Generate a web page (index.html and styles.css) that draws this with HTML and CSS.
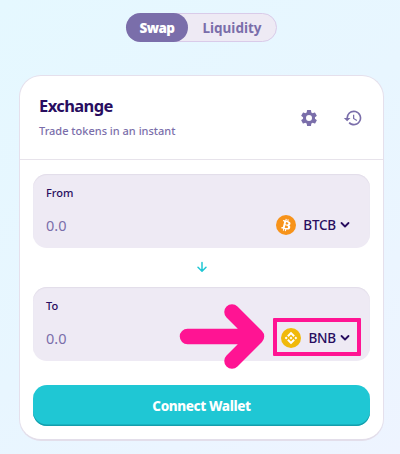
FILE: index.html
```
<!DOCTYPE html>
<html lang="en">
<head>
  <meta charset="UTF-8">
  <meta name="viewport" content="width=device-width, initial-scale=1.0">
  <title>Exchange</title>
  <link rel="stylesheet" href="styles.css">
</head>
<body>
  <nav class="tabs">
    <a class="tab active">Swap</a>
    <a class="tab">Liquidity</a>
  </nav>

  <main class="card">
    <header class="card-header">
      <div class="heading">
        <h1>Exchange</h1>
        <p>Trade tokens in an instant</p>
      </div>
      <svg class="icon" viewBox="0 0 24 24"><path d="M19.14 12.94c.04-.3.06-.61.06-.94s-.02-.64-.07-.94l2.03-1.58a.49.49 0 0 0 .12-.61l-1.92-3.32a.49.49 0 0 0-.59-.22l-2.39.96a7 7 0 0 0-1.62-.94l-.36-2.54A.48.48 0 0 0 13.92 2.400h-3.840a.48.48 0 0 0-.47.41l-.36 2.540a7 7 0 0 0-1.620.940l-2.390-.960a.48.48 0 0 0-.590.220L2.740 8.870a.48.48 0 0 0 .120.610l2.030 1.580a6 6 0 0 0 0 1.880l-2.030 1.580a.49.49 0 0 0-.120.610l1.920 3.320c.12.220.370.290.590.220l2.390-.960c.5.380 1.030.700 1.620.940l.360 2.540c.05.240.240.410.480.410h3.840c.24 0 .440-.170.470-.410l.360-2.540a7 7 0 0 0 1.620-.940l2.390.960c.22.080.470 0 .590-.220l1.920-3.320a.48.48 0 0 0-.120-.610zM12 15.600a3.600 3.600 0 1 1 0-7.200 3.600 3.600 0 0 1 0 7.200z"/></svg>
      <svg class="icon" viewBox="0 0 24 24"><path d="M13 3a9 9 0 0 0-9 9H1l3.890 3.890.070.140L9 12H6a7 7 0 1 1 2.060 4.940l-1.420 1.420A9 9 0 1 0 13 3zm-1 5v5l4.280 2.540.720-1.210-3.500-2.080V8z"/></svg>
    </header>

    <div class="card-body">
      <section class="field">
        <div class="label">From</div>
        <div class="field-row">
          <span class="amount">0.0</span>
          <div class="token">
            <svg class="coin" viewBox="0 0 32 32"><circle cx="16" cy="16" r="16" fill="#f7931a"/><path fill="#fff" d="M23.190 14.020c.310-2.100-1.290-3.230-3.480-3.980l.710-2.850-1.730-.430-.690 2.770-1.390-.330.700-2.790-1.730-.430-.710 2.840-1.100-.260-2.400-.600-.460 1.860s1.290.300 1.260.310c.700.180.830.640.810 1.010l-1.950 7.790c-.090.210-.310.530-.790.410l-1.260-.310-.860 2 2.250.560 1.240.320-.720 2.880 1.730.430.710-2.850 1.380.360-.710 2.830 1.730.430.720-2.870c2.950.560 5.170.330 6.100-2.340.750-2.150-.040-3.390-1.590-4.190 1.130-.260 1.980-1 2.210-2.540zm-3.950 5.540c-.540 2.150-4.150.990-5.320.700l.950-3.810c1.170.290 4.930.870 4.370 3.110zm.530-5.570c-.490 1.950-3.490.960-4.470.720l.860-3.460c.980.240 4.120.700 3.610 2.740z"/></svg>
            <span class="symbol">BTCB</span>
            <svg class="chevron" viewBox="0 0 10 8"><path d="M1.500 2 5 5.500 8.500 2"/></svg>
          </div>
        </div>
      </section>

      <svg class="arrow-down" viewBox="0 0 12 12"><path d="M6 1.500v8.500M2 6.300l4 4 4-4"/></svg>

      <section class="field">
        <div class="label">To</div>
        <div class="field-row">
          <span class="amount">0.0</span>
          <div class="token">
            <svg class="coin" viewBox="0 0 32 32"><circle cx="16" cy="16" r="16" fill="#f0b90b"/><path fill="#fff" d="M12.120 14.400 16 10.520l3.890 3.890 2.260-2.260L16 6l-6.140 6.140zM6 16l2.260-2.260L10.520 16l-2.260 2.260zm6.120 1.600L16 21.480l3.890-3.890 2.260 2.260L16 26l-6.140-6.140zM21.480 16l2.260-2.260L26 16l-2.260 2.260zM18.290 16 16 18.290 13.710 16 16 13.710z"/></svg>
            <span class="symbol">BNB</span>
            <svg class="chevron" viewBox="0 0 10 8"><path d="M1.500 2 5 5.500 8.500 2"/></svg>
          </div>
        </div>
        <div class="highlight"></div>
        <svg class="pointer" viewBox="0 0 86 66"><path d="M8.500 33.500H77M53 9l24.500 24.500L53 58"/></svg>
      </section>

      <button class="connect">Connect Wallet</button>
    </div>
  </main>
</body>
</html>
```
FILE: styles.css
```
* {
  box-sizing: border-box;
}

body {
  margin: 0;
  height: 454px;
  padding: 13px 16px 0 19px;
  overflow: hidden;
  font-family: "Noto Sans", sans-serif;
  color: #280d5f;
  background: linear-gradient(140deg, #e5f8ff 0%, #e8f6ff 50%, #eef4ff 100%);
}

.tabs {
  display: flex;
  width: 151px;
  height: 29px;
  margin: 0 auto 33px 107px;
  border: 1px solid #d9cbe9;
  border-radius: 15px;
  background: #eeeaf4;
}

.tab {
  flex: 1;
  display: flex;
  align-items: center;
  justify-content: center;
  font-size: 13.5px;
  font-weight: 700;
  color: #7a6eaa;
}

.tab.active {
  flex: 0 0 62px;
  margin: -1px 0 -1px -1px;
  border-radius: 15px;
  font-weight: 900;
  letter-spacing: -0.6px;
  color: #fff;
  background: #7a6eaa;
}

.card {
  height: 366px;
  border: 1px solid #e5e0ec;
  border-bottom: 2px solid #e3deea;
  border-radius: 22px;
  background: #fff;
}

.card-header {
  display: flex;
  align-items: center;
  gap: 24px;
  height: 84px;
  padding: 0 20px 0 19px;
  border-bottom: 1px solid #e7e3eb;
}

.heading {
  flex: 1;
}

.heading h1 {
  margin: -2px 0 0;
  font-size: 16.5px;
  line-height: 24px;
  font-weight: 700;
  letter-spacing: -0.6px;
}

.heading p {
  margin: 4px 0 0;
  font-size: 11px;
  line-height: 18px;
  font-weight: 500;
  color: #7a6eaa;
  white-space: nowrap;
}

.icon {
  width: 20px;
  height: 20px;
  fill: #7a6eaa;
}

.card-body {
  display: flex;
  flex-direction: column;
  padding: 14px 13px 0;
}

.field {
  position: relative;
  height: 74px;
  padding: 10px 20px 0 13px;
  border-radius: 14px;
  background: #eeeaf4;
  box-shadow: inset 0 1px 1px #e2dde9;
}

.label {
  font-size: 11px;
  line-height: 18px;
  font-weight: 500;
}

.field-row {
  display: flex;
  align-items: center;
  justify-content: space-between;
  height: 20px;
  margin-top: 13px;
}

.amount {
  font-size: 14.5px;
  color: #7a6eaa;
}

.token {
  display: flex;
  align-items: center;
}

.coin {
  width: 20px;
  height: 20px;
  margin-right: 7px;
}

.symbol {
  font-size: 13.5px;
  font-weight: 500;
  letter-spacing: -0.2px;
}

.chevron {
  width: 10px;
  height: 8px;
  margin-left: 4px;
  fill: none;
  stroke: #280d5f;
  stroke-width: 1.8;
  stroke-linecap: round;
  stroke-linejoin: round;
}

.arrow-down {
  width: 12px;
  height: 12px;
  margin: 13px auto 14px;
  fill: none;
  stroke: #1fc7d4;
  stroke-width: 1.5;
  stroke-linecap: round;
  stroke-linejoin: round;
}

/* callout drawn over the token selector */
.highlight {
  position: absolute;
  top: 31px;
  left: 240px;
  width: 88px;
  height: 38px;
  border: 4px solid #ff1493;
  border-radius: 1px;
}

.pointer {
  position: absolute;
  top: 16px;
  left: 146px;
  width: 86px;
  height: 66px;
  overflow: visible;
  fill: none;
  stroke: #ff1493;
  stroke-width: 15.5;
  stroke-linecap: round;
  stroke-linejoin: round;
}

.connect {
  height: 41px;
  margin-top: 24px;
  padding: 0;
  border: none;
  border-radius: 14px;
  font-family: inherit;
  font-size: 13.5px;
  font-weight: 800;
  letter-spacing: -0.4px;
  color: #fff;
  background: #1fc7d4;
  box-shadow: inset 0 -1.5px 0 #159eac;
}
```
